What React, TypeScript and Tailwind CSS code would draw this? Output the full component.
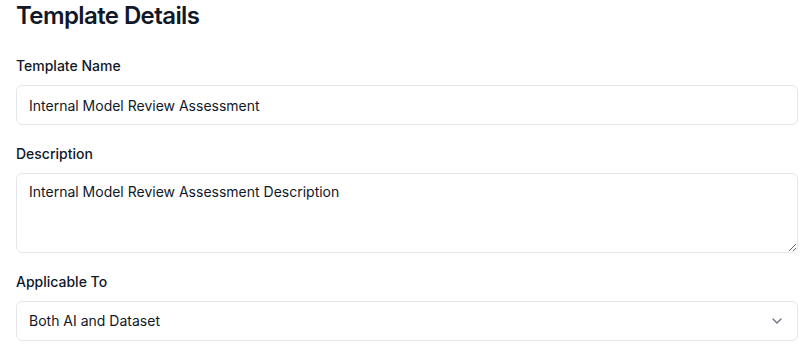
import { ChevronDown } from "lucide-react";

function Label({ children }: { children: React.ReactNode }) {
  return <label className="mb-[9px] block text-sm font-medium text-[#111827]">{children}</label>;
}

export default function App() {
  return (
    <div className="min-h-screen bg-white pl-4 pr-[11px] font-['Inter',sans-serif] text-[#111827]">
      <h2 className="mb-6 text-2xl font-semibold leading-8 tracking-tight">Template Details</h2>
      <div className="flex flex-col gap-[19px]">
        <div>
          <Label>Template Name</Label>
          <input
            defaultValue="Internal Model Review Assessment"
            className="h-10 w-full rounded-md border border-[#e5e7eb] bg-white px-3 text-sm outline-none"
          />
        </div>
        <div>
          <Label>Description</Label>
          <textarea
            defaultValue="Internal Model Review Assessment Description"
            className="block h-20 w-full rounded-md border border-[#e5e7eb] bg-white px-3 py-2 text-sm leading-5 outline-none"
          />
        </div>
        <div>
          <Label>Applicable To</Label>
          <button
            type="button"
            className="flex h-10 w-full items-center justify-between rounded-md border border-[#e5e7eb] bg-white px-3 text-left text-sm"
          >
            <span>Both AI and Dataset</span>
            <ChevronDown className="h-4 w-4 text-[#6b7280]" strokeWidth={2} />
          </button>
        </div>
      </div>
    </div>
  );
}
